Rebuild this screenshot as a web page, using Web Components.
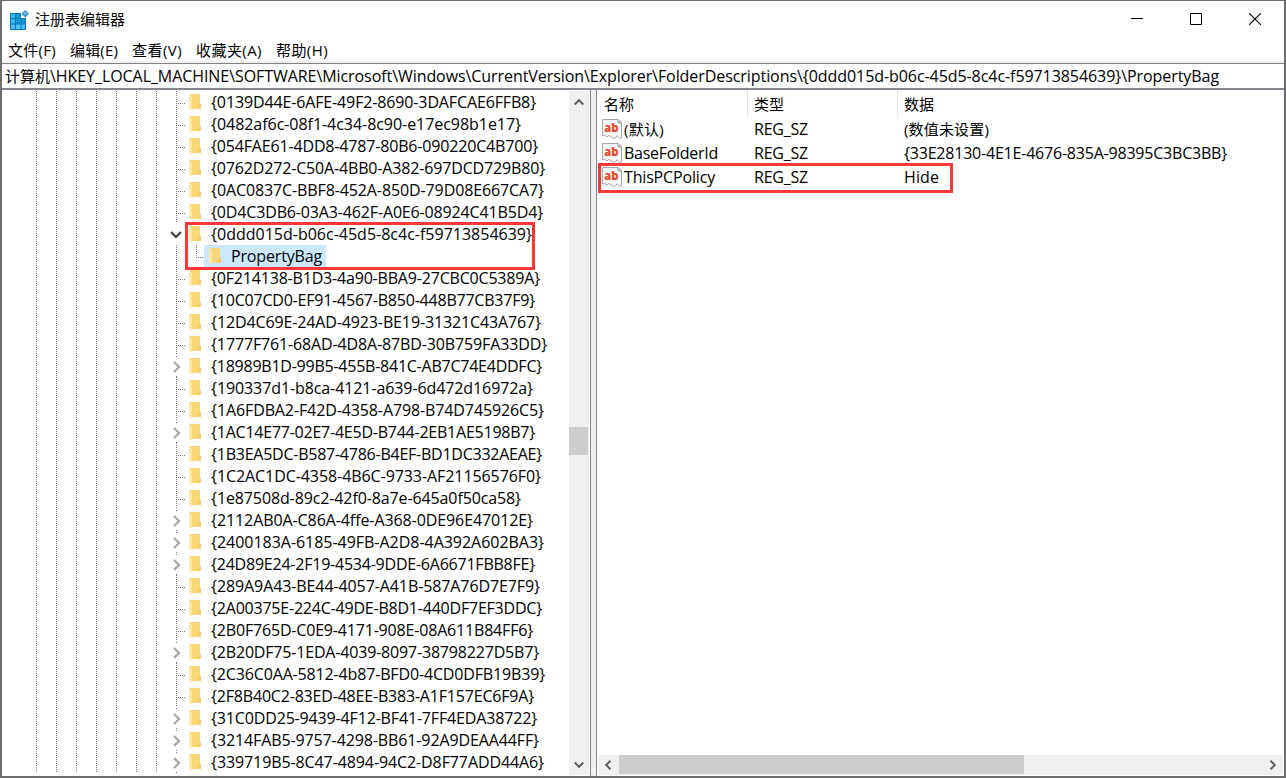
<!DOCTYPE html>
<html lang="zh-CN">
<head>
<meta charset="utf-8">
<title>注册表编辑器</title>
<style>
  html, body {
    margin: 0;
    height: 100%;
    overflow: hidden;
    background: #fff;
  }
</style>
</head>
<body>
<reg-window></reg-window>

<script>
// Text that is tracked to a fixed ink width.
// The "latin" attribute sets it one pixel larger than the Chinese text.
class FitText extends HTMLElement {
  constructor() {
    super();
    this.attachShadow({ mode: 'open' });
    this.shadowRoot.innerHTML = `
      <style>
        :host { display: inline-block; white-space: nowrap; }
        :host([latin]) { font-size: 16px; }
      </style>
      <span><slot></slot></span>
    `;
  }

  connectedCallback() {
    const width = Number(this.getAttribute('w'));
    if (!width) return;
    const natural = this.shadowRoot.querySelector('span').getBoundingClientRect().width;
    this.style.letterSpacing = (width - natural) / this.textContent.length + 'px';
  }
}

class RegIcon extends HTMLElement {
  constructor() {
    super();
    this.attachShadow({ mode: 'open' });
  }

  connectedCallback() {
    this.shadowRoot.innerHTML = `
      <style>
        :host { display: block; flex: none; }
        svg { display: block; }
      </style>
      ${RegIcon.shapes[this.getAttribute('name')]}
    `;
  }
}

RegIcon.shapes = {
  app: `<svg width="20" height="20" viewBox="0 0 20 20">
      <path fill="#0b76b5" d="M1 3h11v5h5v12H1z"/>
      <path fill="#35b8ee" d="M2 4h4v4H2zM2 9h4v4.5H2z"/>
      <path fill="#1a96d4" d="M7 4h4.5v4H7zM7 9h4.5v4.5H7zM12.5 9H16v4.5h-3.5z"/>
      <path fill="#4cc4f3" d="M2 14.5h4V19H2zM7 14.5h4.5V19H7zM12.5 14.5H16V19h-3.5z"/>
      <path fill="#3b93bd" d="M16.2 0L20 3.7l-3.8 3.8-3.8-3.8z"/>
      <path fill="#6cc3e6" d="M16.2 1.8l1.9 1.9-1.9 1.3-1.9-1.3z"/>
    </svg>`,
  folder: `<svg width="12" height="16" viewBox="0 0 12 16">
      <path fill="#f9d778" d="M1 0h10v10h1v5H3z"/>
      <path fill="#f2c963" d="M9.5 10H12v5H8.5z" opacity=".7"/>
      <path fill="#ffe9a9" d="M0 0l3 2.6V16l-1 0-2-1.4z"/>
    </svg>`,
  string: `<svg width="20" height="20" viewBox="0 0 20 20">
      <path fill="#f7f7f7" stroke="#a5a5a5" d="M.5.5h15.5l3.5 3.5v14.7l-1.8.6-2.4-2.4-2.7 2.3-3-.8-2.4-2-2.4 1.5-2-1.5-2.3.4z"/>
      <path fill="#d5d5d5" stroke="#a5a5a5" d="M16 .5V4h3.5z"/>
      <text x="2.2" y="13" textLength="14.3" lengthAdjust="spacingAndGlyphs" font-family="Open Sans, sans-serif" font-weight="800" font-size="12" fill="#d9502f">ab</text>
    </svg>`,
  right: `<svg width="8" height="12" viewBox="0 0 8 12"><path fill="none" stroke="currentColor" stroke-width="2.2" d="M1 1l5 5-5 5"/></svg>`,
  down: `<svg width="12" height="8" viewBox="0 0 12 8"><path fill="none" stroke="currentColor" stroke-width="2.2" d="M1 1l5 5 5-5"/></svg>`,
  scrollUp: `<svg width="10" height="8" viewBox="0 0 10 8"><path fill="none" stroke="#606060" stroke-width="2" d="M.7 6.5L5 2.2l4.3 4.3"/></svg>`,
  scrollDown: `<svg width="10" height="8" viewBox="0 0 10 8"><path fill="none" stroke="#606060" stroke-width="2" d="M.7 1.5L5 5.8l4.3-4.3"/></svg>`,
  scrollLeft: `<svg width="8" height="10" viewBox="0 0 8 10"><path fill="none" stroke="#606060" stroke-width="2" d="M6.5.7L2.2 5l4.3 4.3"/></svg>`,
  scrollRight: `<svg width="8" height="10" viewBox="0 0 8 10"><path fill="none" stroke="#606060" stroke-width="2" d="M1.5.7L5.8 5 1.5 9.3"/></svg>`,
  min: `<svg width="12" height="12" viewBox="0 0 12 12"><path fill="#000" d="M0 5h12v1H0z"/></svg>`,
  max: `<svg width="12" height="12" viewBox="0 0 12 12"><path fill="none" stroke="#000" d="M.5.5h11v11H.5z"/></svg>`,
  close: `<svg width="12" height="12" viewBox="0 0 12 12"><path fill="none" stroke="#000" stroke-width="1.1" d="M0 0l12 12M12 0L0 12"/></svg>`
};

class TitleBar extends HTMLElement {
  constructor() {
    super();
    this.attachShadow({ mode: 'open' });
    this.shadowRoot.innerHTML = `
      <style>
        :host { display: flex; align-items: center; height: 37px; padding-left: 7px; }
        .title { flex: 1; padding: 0 0 2px 6px; }
        .buttons { display: flex; gap: 47px; padding: 0 23px 2px 0; }
      </style>
      <reg-icon name="app"></reg-icon>
      <div class="title"><slot></slot></div>
      <div class="buttons">
        <reg-icon name="min"></reg-icon>
        <reg-icon name="max"></reg-icon>
        <reg-icon name="close"></reg-icon>
      </div>
    `;
  }
}

class MenuBar extends HTMLElement {
  constructor() {
    super();
    this.attachShadow({ mode: 'open' });
    this.shadowRoot.innerHTML = `
      <style>
        :host {
          display: flex;
          align-items: center;
          gap: 14px;
          height: 25px;
          padding-left: 6px;
          box-sizing: border-box;
          border-bottom: 2px solid #f0f0f0;
        }
      </style>
      <fit-text w="48">文件(F)</fit-text>
      <fit-text w="48">编辑(E)</fit-text>
      <fit-text w="50">查看(V)</fit-text>
      <fit-text w="66">收藏夹(A)</fit-text>
      <fit-text w="52">帮助(H)</fit-text>
    `;
  }
}

class TreeRow extends HTMLElement {
  constructor() {
    super();
    this.attachShadow({ mode: 'open' });
  }

  connectedCallback() {
    const state = this.getAttribute('state') || 'leaf';
    const child = state === 'child';
    const chevron = state === 'closed' ? 'right' : state === 'open' ? 'down' : '';
    this.shadowRoot.innerHTML = `
      <style>
        :host { display: flex; height: 22px; }
        .branch {
          width: 19px;
          flex: none;
          display: flex;
          align-items: center;
          box-sizing: border-box;
          background:
            repeating-linear-gradient(#777 0 1px, transparent 1px 2px) 6px 0 / 1px 100% no-repeat,
            repeating-linear-gradient(90deg, #777 0 1px, transparent 1px 2px) 8px 12px / 8px 1px no-repeat;
        }
        .branch.closed {
          padding: 1px 0 0 3px;
          color: #a6a6a6;
          background:
            linear-gradient(#777, #777) 6px 1px / 1px 1px no-repeat,
            linear-gradient(#777, #777) 6px 21px / 1px 1px no-repeat;
        }
        .branch.open { color: #404040; background: none; padding-top: 2px; }
        .branch.child {
          background: repeating-linear-gradient(#777 0 1px, transparent 1px 2px) 6px 0 / 1px 100% no-repeat;
        }
        .elbow {
          width: 15px;
          flex: none;
          background:
            repeating-linear-gradient(#777 0 1px, transparent 1px 2px) 7px 0 / 1px 12px no-repeat,
            repeating-linear-gradient(90deg, #777 0 1px, transparent 1px 2px) 7px 12px / 8px 1px no-repeat;
        }
        .label { display: flex; align-items: center; gap: 10px; }
        .label.child { background: #cce8ff; padding: 0 4px 0 5px; }
      </style>
      <div class="branch ${state}">${chevron ? `<reg-icon name="${chevron}"></reg-icon>` : ''}</div>
      ${child ? '<div class="elbow"></div>' : ''}
      <div class="label ${state}">
        <reg-icon name="folder"></reg-icon>
        <fit-text latin w="${this.getAttribute('w')}">${this.getAttribute('text')}</fit-text>
      </div>
    `;
  }
}

// [text, text width, state]
const KEYS = [
  ['{0139D44E-6AFE-49F2-8690-3DAFCAE6FFB8}', 325],
  ['{0482af6c-08f1-4c34-8c90-e17ec98b1e17}', 310],
  ['{054FAE61-4DD8-4787-80B6-090220C4B700}', 327],
  ['{0762D272-C50A-4BB0-A382-697DCD729B80}', 334],
  ['{0AC0837C-BBF8-452A-850D-79D08E667CA7}', 333],
  ['{0D4C3DB6-03A3-462F-A0E6-08924C41B5D4}', 332],
  ['{0ddd015d-b06c-45d5-8c4c-f59713854639}', 321, 'open'],
  ['PropertyBag', 91, 'child'],
  ['{0F214138-B1D3-4a90-BBA9-27CBC0C5389A}', 329],
  ['{10C07CD0-EF91-4567-B850-448B77CB37F9}', 324],
  ['{12D4C69E-24AD-4923-BE19-31321C43A767}', 330],
  ['{1777F761-68AD-4D8A-87BD-30B759FA33DD}', 336],
  ['{18989B1D-99B5-455B-841C-AB7C74E4DDFC}', 331, 'closed'],
  ['{190337d1-b8ca-4121-a639-6d472d16972a}', 322],
  ['{1A6FDBA2-F42D-4358-A798-B74D745926C5}', 333],
  ['{1AC14E77-02E7-4E5D-B744-2EB1AE5198B7}', 324, 'closed'],
  ['{1B3EA5DC-B587-4786-B4EF-BD1DC332AEAE}', 331],
  ['{1C2AC1DC-4358-4B6C-9733-AF21156576F0}', 330],
  ['{1e87508d-89c2-42f0-8a7e-645a0f50ca58}', 310],
  ['{2112AB0A-C86A-4ffe-A368-0DE96E47012E}', 322, 'closed'],
  ['{2400183A-6185-49FB-A2D8-4A392A602BA3}', 333, 'closed'],
  ['{24D89E24-2F19-4534-9DDE-6A6671FBB8FE}', 324, 'closed'],
  ['{289A9A43-BE44-4057-A41B-587A76D7E7F9}', 329],
  ['{2A00375E-224C-49DE-B8D1-440DF7EF3DDC}', 331],
  ['{2B0F765D-C0E9-4171-908E-08A611B84FF6}', 322],
  ['{2B20DF75-1EDA-4039-8097-38798227D5B7}', 328, 'closed'],
  ['{2C36C0AA-5812-4b87-BFD0-4CD0DFB19B39}', 334],
  ['{2F8B40C2-83ED-48EE-B383-A1F157EC6F9A}', 323],
  ['{31C0DD25-9439-4F12-BF41-7FF4EDA38722}', 326, 'closed'],
  ['{3214FAB5-9757-4298-BB61-92A9DEAA44FF}', 328, 'closed'],
  ['{339719B5-8C47-4894-94C2-D8F77ADD44A6}', 333, 'closed']
];

class KeyTree extends HTMLElement {
  constructor() {
    super();
    this.attachShadow({ mode: 'open' });
    // One dotted guide per ancestor level, 20px apart.
    const guides = [34, 54, 74, 94, 114, 134, 154]
      .map(x => `repeating-linear-gradient(#777 0 1px, transparent 1px 2px) ${x}px 1px / 1px 682px no-repeat`)
      .join(',');
    this.shadowRoot.innerHTML = `
      <style>
        :host {
          display: flex;
          position: relative;
          width: 588px;
          flex: none;
          border-right: 1px solid #828790;
        }
        .rows { flex: 1; min-width: 0; box-sizing: border-box; padding: 1px 0 0 168px; background: ${guides}; }
        .scroll {
          width: 20px;
          flex: none;
          display: flex;
          flex-direction: column;
          align-items: center;
          margin: 1px 1px 1px 0;
          background: #f0f0f0;
          box-sizing: border-box;
          padding: 7px 1px 6px 0;
        }
        .track { flex: 1; width: 100%; padding-top: 321px; box-sizing: border-box; }
        .thumb { height: 28px; background: #cdcdcd; }
        .mark {
          position: absolute;
          left: 183px;
          top: 132px;
          width: 344px;
          height: 42px;
          border: 3px solid #fb3737;
        }
      </style>
      <div class="rows">
        ${KEYS.map(([text, w, state]) =>
          `<tree-row text="${text}" w="${w}" state="${state || 'leaf'}"></tree-row>`).join('')}
      </div>
      <div class="scroll">
        <reg-icon name="scrollUp"></reg-icon>
        <div class="track"><div class="thumb"></div></div>
        <reg-icon name="scrollDown"></reg-icon>
      </div>
      <div class="mark"></div>
    `;
  }
}

class ValueList extends HTMLElement {
  constructor() {
    super();
    this.attachShadow({ mode: 'open' });
    this.shadowRoot.innerHTML = `
      <style>
        :host {
          display: flex;
          flex-direction: column;
          position: relative;
          flex: 1;
          border-left: 1px solid #828790;
        }
        .head, .row { display: grid; grid-template-columns: 151px 150px 1fr; align-items: center; }
        .head { height: 27px; }
        .head div {
          height: 27px;
          display: flex;
          align-items: center;
          padding: 0 0 0 7px;
          box-sizing: border-box;
          border-right: 1px solid #e5e5e5;
        }
        .head div + div { padding-left: 6px; }
        .head div:last-child { border: 0; }
        .row { height: 24px; }
        .row > * { margin-left: 6px; }
        .row > .name { display: flex; align-items: center; gap: 2px; margin-left: 5px; }
        .fill { flex: 1; }
        .scroll {
          height: 20px;
          display: flex;
          align-items: center;
          background: #f0f0f0;
          margin: 0 1px 1px;
          padding: 0 6px;
        }
        .track { flex: 1; padding-left: 7px; height: 19px; align-self: flex-start; }
        .thumb { width: 405px; height: 19px; background: #cdcdcd; }
        .mark {
          position: absolute;
          left: 1px;
          top: 73px;
          width: 349px;
          height: 24px;
          border: 3px solid #fb3737;
        }
      </style>
      <div class="head"><div>名称</div><div>类型</div><div>数据</div></div>
      <div class="row">
        <div class="name"><reg-icon name="string"></reg-icon><fit-text w="40">(默认)</fit-text></div>
        <fit-text latin w="54">REG_SZ</fit-text>
        <fit-text w="85">(数值未设置)</fit-text>
      </div>
      <div class="row">
        <div class="name"><reg-icon name="string"></reg-icon><fit-text latin w="94">BaseFolderId</fit-text></div>
        <fit-text latin w="54">REG_SZ</fit-text>
        <fit-text latin w="323">{33E28130-4E1E-4676-835A-98395C3BC3BB}</fit-text>
      </div>
      <div class="row">
        <div class="name"><reg-icon name="string"></reg-icon><fit-text latin w="91">ThisPCPolicy</fit-text></div>
        <fit-text latin w="54">REG_SZ</fit-text>
        <fit-text latin w="35">Hide</fit-text>
      </div>
      <div class="fill"></div>
      <div class="scroll">
        <reg-icon name="scrollLeft"></reg-icon>
        <div class="track"><div class="thumb"></div></div>
        <reg-icon name="scrollRight"></reg-icon>
      </div>
      <div class="mark"></div>
    `;
  }
}

class RegWindow extends HTMLElement {
  constructor() {
    super();
    this.attachShadow({ mode: 'open' });
    this.shadowRoot.innerHTML = `
      <style>
        :host {
          display: flex;
          flex-direction: column;
          width: 1286px;
          height: 778px;
          box-sizing: border-box;
          border: solid #6d6d70;
          border-width: 1px 2px 2px;
          background: #fff;
          color: #000;
          font: 15px/20px "Open Sans", "Noto Sans CJK SC", sans-serif;
        }
        .address {
          display: flex;
          align-items: baseline;
          height: 27px;
          box-sizing: border-box;
          border-top: 1px solid #828282;
          border-bottom: 2px solid #828790;
          padding: 2px 0 0 3px;
        }
        .panes { flex: 1; display: flex; min-height: 0; }
        .splitter { width: 5px; flex: none; background: #f0f0f0; }
      </style>
      <title-bar>注册表编辑器</title-bar>
      <menu-bar></menu-bar>
      <div class="address"><fit-text w="45">计算机</fit-text><fit-text latin w="1169">\\HKEY_LOCAL_MACHINE\\SOFTWARE\\Microsoft\\Windows\\CurrentVersion\\Explorer\\FolderDescriptions\\{0ddd015d-b06c-45d5-8c4c-f59713854639}\\PropertyBag</fit-text></div>
      <div class="panes">
        <key-tree></key-tree>
        <div class="splitter"></div>
        <value-list></value-list>
      </div>
    `;
  }
}

customElements.define('fit-text', FitText);
customElements.define('reg-icon', RegIcon);
customElements.define('title-bar', TitleBar);
customElements.define('menu-bar', MenuBar);
customElements.define('tree-row', TreeRow);
customElements.define('key-tree', KeyTree);
customElements.define('value-list', ValueList);
customElements.define('reg-window', RegWindow);
</script>
</body>
</html>
